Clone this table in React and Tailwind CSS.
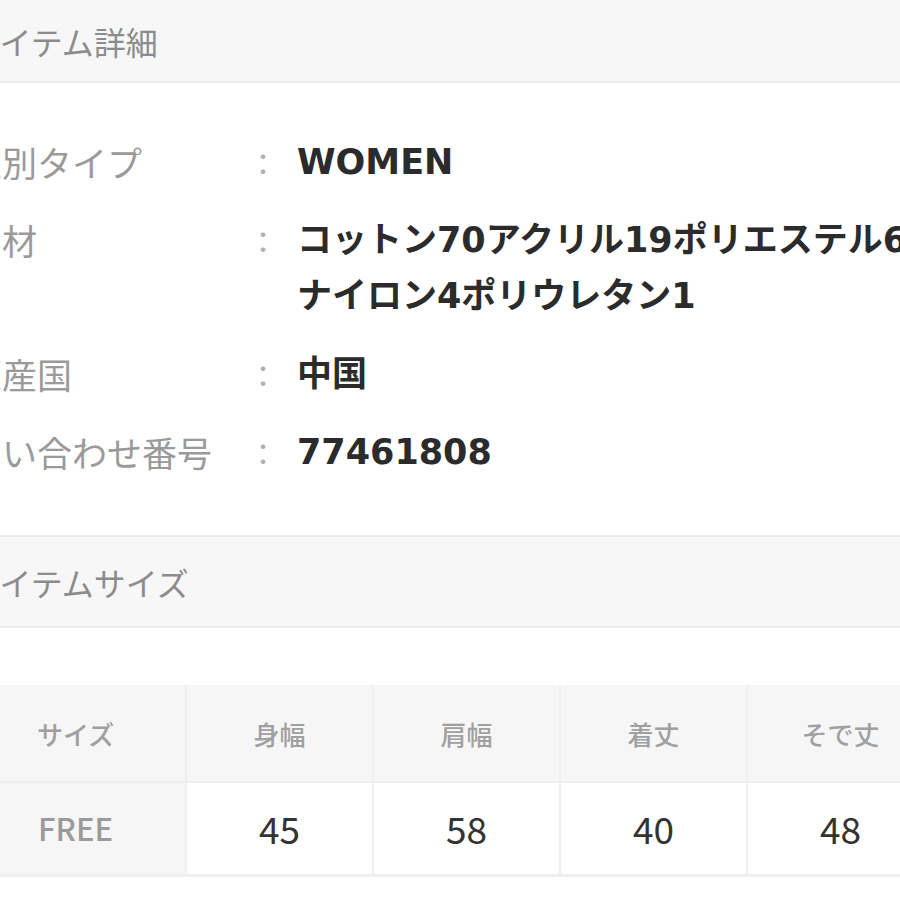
import React from 'react';

const details = [
  { label: '性別タイプ', lines: ['WOMEN'] },
  { label: '素材', lines: ['コットン70アクリル19ポリエステル6', 'ナイロン4ポリウレタン1'] },
  { label: '原産国', lines: ['中国'] },
  { label: '問い合わせ番号', lines: ['77461808'] },
];

const sizeHeads = ['身幅', '肩幅', '着丈', 'そで丈'];
const sizeValues = ['45', '58', '40', '48'];

const SectionHead = ({ title, className = '' }) => (
  <div className={`flex items-center bg-[#f7f7f7] border-[#ebebeb] ${className}`}>
    <h2 className="ml-[-31px] text-[32px] leading-none text-[#8c8c8c] whitespace-nowrap">{title}</h2>
  </div>
);

const App = () => {
  return (
    <div
      className="w-[900px] h-[900px] overflow-hidden bg-white"
      style={{ fontFamily: '"Noto Sans CJK JP", "Noto Sans", sans-serif' }}
    >
      <SectionHead title="アイテム詳細" className="h-[83px] border-b-2" />

      <dl className="pt-[51px] pb-[55px] flex flex-col gap-[22px]">
        {details.map((row) => (
          <div key={row.label} className="flex leading-[56px] whitespace-nowrap">
            <dt className="ml-[-33px] w-[281px] shrink-0 text-[35px] text-[#9a9a9a]">{row.label}</dt>
            <span className="w-[30px] shrink-0 text-[30px] text-[#b0b0b0] text-center">：</span>
            <dd
              className="ml-[19px] text-[35px] font-semibold text-[#2b2b2b]"
              style={{ fontFamily: '"DejaVu Sans", "Noto Sans CJK JP", sans-serif' }}
            >
              {row.lines.map((l) => (
                <div key={l}>{l}</div>
              ))}
            </dd>
          </div>
        ))}
      </dl>

      <SectionHead title="アイテムサイズ" className="h-[93px] border-y-2" />

      <div className="mt-[57px] w-[933px] grid grid-cols-5 gap-[2px] bg-[#efefef] border-b-[3px] border-[#efefef]">
        <div className="h-[96px] bg-[#f6f6f6] flex items-center pl-[37px] text-[26px] font-medium text-[#a0a0a0]">サイズ</div>
        {sizeHeads.map((h) => (
          <div key={h} className="h-[96px] bg-[#f6f6f6] flex items-center justify-center text-[26px] font-medium text-[#a0a0a0]">
            {h}
          </div>
        ))}
        <div className="h-[91px] bg-[#f6f6f6] flex items-center pl-[38px] text-[31px] font-medium text-[#9a9a9a]">FREE</div>
        {sizeValues.map((v, i) => (
          <div key={i} className="h-[91px] bg-white flex items-center justify-center text-[37px] text-[#333]">
            {v}
          </div>
        ))}
      </div>
    </div>
  );
};

export default App;
